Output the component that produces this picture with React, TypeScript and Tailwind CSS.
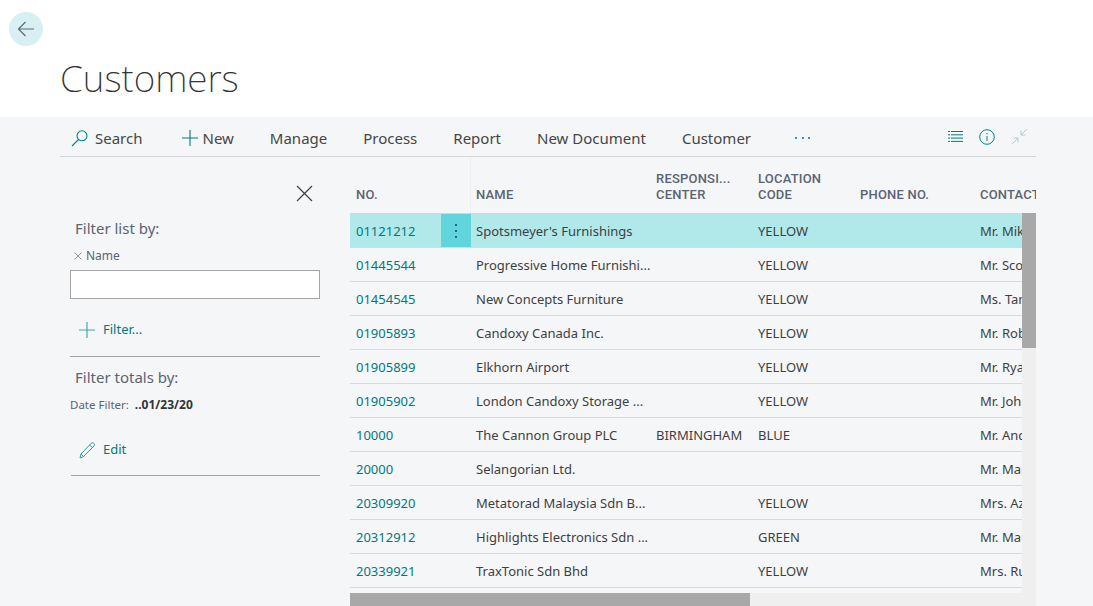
import React from "react";

const rows = [
  ["01121212", "Spotsmeyer's Furnishings", "", "YELLOW", "Mr. Mike Nash"],
  ["01445544", "Progressive Home Furnishi...", "", "YELLOW", "Mr. Scott Mitchell"],
  ["01454545", "New Concepts Furniture", "", "YELLOW", "Ms. Tammy L."],
  ["01905893", "Candoxy Canada Inc.", "", "YELLOW", "Mr. Rob Young"],
  ["01905899", "Elkhorn Airport", "", "YELLOW", "Mr. Ryan Danner"],
  ["01905902", "London Candoxy Storage ...", "", "YELLOW", "Mr. John Emory"],
  ["10000", "The Cannon Group PLC", "BIRMINGHAM", "BLUE", "Mr. Andy Teal"],
  ["20000", "Selangorian Ltd.", "", "", "Mr. Mark McArthur"],
  ["20309920", "Metatorad Malaysia Sdn B...", "", "YELLOW", "Mrs. Azleen"],
  ["20312912", "Highlights Electronics Sdn ...", "", "GREEN", "Mr. Mark"],
  ["20339921", "TraxTonic Sdn Bhd", "", "YELLOW", "Mrs. Rubina"],
];

const menu = ["Manage", "Process", "Report", "New Document", "Customer"];

function Row({ r, selected }: { r: string[]; selected: boolean }) {
  return (
    <div className={`flex h-[34px] shrink-0 items-center border-b border-[#d9dadd] text-[13px] text-[#3f3f3f] ${selected ? "bg-[#b1e8ea]" : ""}`}>
      <div className="w-[91px] shrink-0 pl-[6px] pt-[2px] text-[#00797e]">{r[0]}</div>
      <div className={`flex h-full w-[30px] shrink-0 items-center justify-center ${selected ? "bg-[#62d5dc]" : ""}`}>
        {selected && (
          <svg width="4" height="16" viewBox="0 0 4 16" fill="#2d666c">
            <rect x="1" y="1" width="2" height="2" />
            <rect x="1" y="7" width="2" height="2" />
            <rect x="1" y="13" width="2" height="2" />
          </svg>
        )}
      </div>
      <div className="w-[180px] shrink-0 whitespace-nowrap pl-[5px] pt-[2px]">{r[1]}</div>
      <div className="w-[102px] shrink-0 whitespace-nowrap pl-[5px] pt-[2px]">{r[2]}</div>
      <div className="w-[102px] shrink-0 pl-[5px] pt-[2px]">{r[3]}</div>
      <div className="w-[120px] shrink-0" />
      <div className="w-[150px] shrink-0 whitespace-nowrap pl-[5px] pt-[2px]">{r[4]}</div>
    </div>
  );
}

export default function App() {
  return (
    <div className="h-[606px] w-[1093px] overflow-hidden bg-[#f5f6f8] font-['Noto_Sans','Open_Sans',sans-serif]">
      <header className="h-[117px] bg-white pl-[9px] pt-[12px]">
        <div className="flex h-[34px] w-[34px] items-center justify-center rounded-full bg-[#d8f0f3]">
          <svg width="18" height="16" viewBox="0 0 18 16" fill="none" stroke="#5f6a6e" strokeWidth="1.2">
            <path d="M17 8H1.500M8.500 1 1.500 8l7 7" />
          </svg>
        </div>
        <h1 className="ml-[51px] mt-[8px] text-[37px] font-extralight leading-[48px] text-[#333]">Customers</h1>
      </header>

      <main className="ml-[60px] w-[976px]">
        <nav className="flex h-[40px] items-center border-b border-[#d4d5d8] pt-[3px] text-[15px] text-[#454545]">
          <div className="ml-[11px] flex items-center gap-[6px]">
            <svg width="18" height="18" viewBox="0 0 18 18" fill="none" stroke="#00848a" strokeWidth="1.1">
              <circle cx="11" cy="6.800" r="5" />
              <path d="M7.500 10.500 1 17" />
            </svg>
            Search
          </div>
          <div className="ml-[40px] flex items-center gap-[4px]">
            <svg width="16" height="16" viewBox="0 0 16 16" fill="none" stroke="#00797e" strokeWidth="1.1">
              <path d="M8 0v16M0 8h16" />
            </svg>
            New
          </div>
          {menu.map((m) => (
            <div key={m} className="ml-[36px]">{m}</div>
          ))}
          <div className="ml-[44px] mb-[1px] flex gap-[4.500px]">
            <span className="h-[2px] w-[2px] bg-[#3b8fc4]" />
            <span className="h-[2px] w-[2px] bg-[#3b8fc4]" />
            <span className="h-[2px] w-[2px] bg-[#3b8fc4]" />
          </div>
          <div className="ml-auto mb-[3px] mr-[8px] flex items-center gap-[16px]">
            <svg width="15" height="11" viewBox="0 0 15 11" fill="none" stroke="#00797e" strokeWidth="1">
              <path d="M0 .500h2M3 .500h12M0 3.800h2M3 3.800h12M0 7.100h2M3 7.100h12M0 10.400h2M3 10.400h12" />
            </svg>
            <svg width="16" height="16" viewBox="0 0 16 16" fill="none" stroke="#00858b" strokeWidth="1">
              <circle cx="8" cy="8" r="7.300" />
              <path d="M8 7v5M8 4v1.400" />
            </svg>
            <svg width="17" height="17" viewBox="0 0 17 17" fill="none" stroke="#a4d2d6" strokeWidth="1">
              <path d="M16 1 10 7M10 2.500V7h4.500M1 16l6-6M2.500 10H7v4.500" />
            </svg>
          </div>
        </nav>

        <div className="flex h-[449px]">
          <aside className="w-[290px] shrink-0 text-[#5b6472]">
            <div className="flex justify-end pr-[37px] pt-[28px]">
              <svg width="17" height="17" viewBox="0 0 17 17" fill="none" stroke="#404040" strokeWidth="1.2">
                <path d="m1 1 15 15M16 1 1 16" />
              </svg>
            </div>
            <div className="ml-[10px] w-[250px]">
              <div className="mt-[15px] pl-[5px] text-[15px] leading-[22px]">Filter list by:</div>
              <div className="mt-[9px] flex items-center gap-[4px] pl-[4px] text-[12px] leading-[16px]">
                <svg width="8" height="8" viewBox="0 0 8 8" fill="none" stroke="#777" strokeWidth=".8">
                  <path d="m.500.500 7 7M7.500.500l-7 7" />
                </svg>
                Name
              </div>
              <div className="mt-[6px] h-[29px] border border-[#a5a5a5] bg-white" />
              <div className="mt-[21px] flex h-[20px] items-center gap-[8px] pl-[9px] text-[13px] text-[#00797e]">
                <svg width="16" height="16" viewBox="0 0 16 16" fill="none" stroke="#4da3a8" strokeWidth="1.2">
                  <path d="M8 0v16M0 8h16" />
                </svg>
                Filter...
              </div>
              <div className="mt-[16px] border-t border-[#a3a5a8] pl-[5px] pt-[9px] text-[15px] leading-[22px]">Filter totals by:</div>
              <div className="mt-[9px] flex items-center text-[11.500px] leading-[16px]">
                Date Filter:
                <span className="ml-[6px] text-[12px] font-bold text-[#333]">..01/23/20</span>
              </div>
              <div className="mt-[27px] flex h-[20px] items-center gap-[8px] pl-[9px] text-[13px] text-[#00797e]">
                <svg width="16" height="17" viewBox="0 0 16 17" fill="none" stroke="#2f9a9f" strokeWidth="1">
                  <path d="M4.500 14.500 1 16l1-4L12 1.500a1.800 1.800 0 0 1 3 2.500ZM2 12l2.500 2.500M10.500 3l3 2.500" />
                </svg>
                Edit
              </div>
              <div className="mt-[15px] ml-[1px] border-t border-[#a3a5a8]" />
            </div>
          </aside>

          <section className="relative w-[686px] overflow-hidden">
            <div className="flex h-[57px] items-stretch border-b border-[#d4d5d8] font-['Roboto',sans-serif] text-[13px] font-medium leading-[16px] tracking-[0.2px] text-[#5b6472]">
              <div className="flex w-[121px] shrink-0 items-end border-r border-[#eeeff1] pb-[10px] pl-[6px]">NO.</div>
              <div className="flex w-[180px] shrink-0 items-end pb-[10px] pl-[5px]">NAME</div>
              <div className="flex w-[102px] shrink-0 items-end pb-[10px] pl-[5px]"><span>RESPONSI...<br />CENTER</span></div>
              <div className="flex w-[102px] shrink-0 items-end pb-[10px] pl-[5px]"><span>LOCATION<br />CODE</span></div>
              <div className="flex w-[120px] shrink-0 items-end pb-[10px] pl-[5px]">PHONE NO.</div>
              <div className="flex w-[150px] shrink-0 items-end pb-[10px] pl-[5px]">CONTACT</div>
            </div>
            <div className="flex flex-col">
              {rows.map((r, i) => (
                <Row key={r[0]} r={r} selected={i === 0} />
              ))}
            </div>
            <div className="absolute bottom-[13px] right-0 top-[56px] w-[14px] bg-[#efefef]">
              <div className="h-[135px] bg-[#a8a8a8]" />
            </div>
            <div className="absolute bottom-0 left-0 h-[13px] w-full bg-[#efefef]">
              <div className="h-full w-[400px] bg-[#a8a8a8]" />
            </div>
          </section>
        </div>
      </main>
    </div>
  );
}
